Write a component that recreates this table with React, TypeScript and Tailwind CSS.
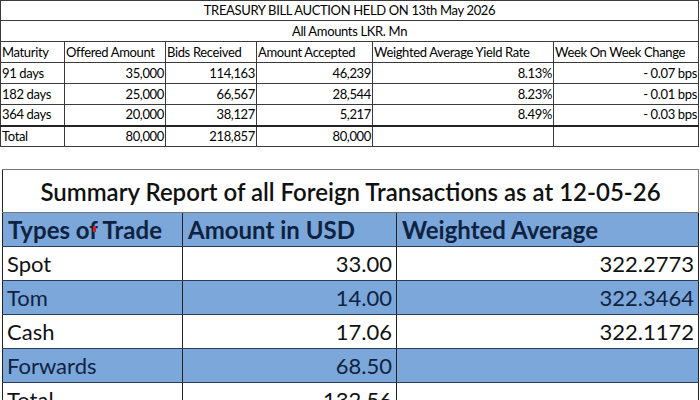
const auction = [
  { m: "91 days", offered: "35,000", bids: "114,163", accepted: "46,239", yield: "8.13%", change: "- 0.07 bps" },
  { m: "182 days", offered: "25,000", bids: "66,567", accepted: "28,544", yield: "8.23%", change: "- 0.01 bps" },
  { m: "364 days", offered: "20,000", bids: "38,127", accepted: "5,217", yield: "8.49%", change: "- 0.03 bps" },
];

const trades = [
  { type: "Spot", usd: "33.00", avg: "322.2773", blue: false },
  { type: "Tom", usd: "14.00", avg: "322.3464", blue: true },
  { type: "Cash", usd: "17.06", avg: "322.1172", blue: false },
  { type: "Forwards", usd: "68.50", avg: "", blue: true },
  { type: "Total", usd: "132.56", avg: "", blue: false },
];

const cell = "border border-[#3a3a3a] px-[1px] leading-none";
const fx = "border-x border-y border-x-[#222] border-y-[#2a3f5f] leading-none";

function AuctionTable() {
  return (
    <table className="w-[698px] table-fixed border-collapse text-[13px] tracking-[-0.35px] text-[#000]">
      <colgroup>
        <col className="w-[64px]" />
        <col className="w-[101px]" />
        <col className="w-[91px]" />
        <col className="w-[116px]" />
        <col className="w-[181px]" />
        <col className="w-[145px]" />
      </colgroup>
      <tbody>
        <tr className="h-[20px]">
          <td colSpan={6} className={`${cell} text-center`}>
            TREASURY BILL AUCTION HELD ON 13th May 2026
          </td>
        </tr>
        <tr className="h-[21px]">
          <td colSpan={6} className={`${cell} text-center`}>
            All Amounts LKR. Mn
          </td>
        </tr>
        <tr className="h-[21px]">
          <td className={cell}>Maturity</td>
          <td className={cell}>Offered Amount</td>
          <td className={cell}>Bids Received</td>
          <td className={cell}>Amount Accepted</td>
          <td className={cell}>Weighted Average Yield Rate</td>
          <td className={cell}>Week On Week Change</td>
        </tr>
        {auction.map((r) => (
          <tr key={r.m} className="h-[21px]">
            <td className={cell}>{r.m}</td>
            <td className={`${cell} text-right`}>{r.offered}</td>
            <td className={`${cell} text-right`}>{r.bids}</td>
            <td className={`${cell} text-right`}>{r.accepted}</td>
            <td className={`${cell} text-right`}>{r.yield}</td>
            <td className={`${cell} text-right`}>{r.change}</td>
          </tr>
        ))}
        <tr className="h-[21px] border-t-2 border-t-[#222]">
          <td className={cell}>Total</td>
          <td className={`${cell} text-right`}>80,000</td>
          <td className={`${cell} text-right`}>218,857</td>
          <td className={`${cell} text-right`}>80,000</td>
          <td className={cell}></td>
          <td className={cell}></td>
        </tr>
      </tbody>
    </table>
  );
}

function ForexTable() {
  return (
    <table className="ml-[2px] w-[696px] table-fixed border-collapse text-[22px] text-[#111]">
      <colgroup>
        <col className="w-[180px]" />
        <col className="w-[214px]" />
        <col className="w-[302px]" />
      </colgroup>
      <tbody>
        <tr className="h-[43px]">
          <td
            colSpan={3}
            className="border border-[#777] border-l-[#222] pt-[2px] text-center text-[24px] font-semibold leading-none"
          >
            Summary Report of all Foreign Transactions as at 12-05-26
          </td>
        </tr>
        <tr className="h-[34px] bg-[#7ba7db] text-[24px] font-bold text-[#0f2340]">
          <td className={`${fx} relative px-[5px]`}>
            Types of Trade
            <span className="absolute left-[90px] top-[13px] h-[6px] w-[3px] bg-[#d42020]" />
          </td>
          <td className={`${fx} px-[5px]`}>Amount in USD</td>
          <td className={`${fx} px-[5px]`}>Weighted Average</td>
        </tr>
        {trades.map((t) => (
          <tr key={t.type} className={`h-[34px] ${t.blue ? "bg-[#7ba7db] text-[#0f2340]" : "bg-white"}`}>
            <td className={`${fx} px-[4px]`}>{t.type}</td>
            <td className={`${fx} px-[4px] text-right`}>{t.usd}</td>
            <td className={`${fx} px-[4px] text-right`}>{t.avg}</td>
          </tr>
        ))}
      </tbody>
    </table>
  );
}

export default function App() {
  return (
    <div className="h-[400px] w-[700px] overflow-hidden bg-white font-['Lato',sans-serif]">
      <AuctionTable />
      <div className="h-[22px]" />
      <ForexTable />
    </div>
  );
}
